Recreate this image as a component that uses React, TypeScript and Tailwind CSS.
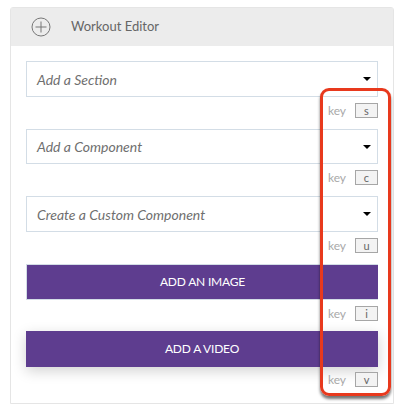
const sans = { fontFamily: 'Lato, sans-serif' }

function SelectRow({ label, short }: { label: string; short?: boolean }) {
  return (
    <div className={`${short ? 'h-[35px]' : 'h-[36px]'} bg-white border border-[#d3dde6] flex items-center justify-between pl-[10px]`}>
      <span className="text-[14px] italic text-[#6f6f6f]">{label}</span>
      <span className="mr-[6px] w-0 h-0 border-x-[4px] border-x-transparent border-t-[4px] border-t-black" />
    </div>
  )
}

function KeyHint({ hotkey }: { hotkey: string }) {
  return (
    <div className="flex justify-end items-center h-[15px] gap-[9px]">
      <span className="text-[12px] text-[#a9a9a9] leading-none">key</span>
      <span className="w-[23px] h-[15px] bg-[#f3f3f3] border border-[#a6a6a6] flex items-center justify-center text-[11px] text-[#666] leading-none">
        {hotkey}
      </span>
    </div>
  )
}

export default function App() {
  return (
    <div className="relative w-[406px] h-[415px] bg-white overflow-hidden pt-[7px] pl-[10px]" style={sans}>
      <div className="w-[384px] h-[397px] border border-[#e5e5e5] rounded-t-[3px]">
        {/* Header */}
        <div className="h-[38px] bg-[#ececec] flex items-center pl-[20px] gap-[20px]">
          <svg viewBox="0 0 20 20" className="w-[20px] h-[20px] text-[#777]" fill="none" stroke="currentColor" strokeWidth="1">
            <circle cx="10" cy="10" r="9" />
            <path d="M10 4.5v11M4.5 10h11" />
          </svg>
          <span className="text-[13px] text-[#666]">Workout Editor</span>
        </div>

        <div className="pl-[15px] pr-[15px] pt-[15px] flex flex-col">
          <SelectRow label="Add a Section" />
          <div className="mt-[6px]">
            <KeyHint hotkey="s" />
          </div>
          <div className="mt-[11px]">
            <SelectRow label="Add a Component" short />
          </div>
          <div className="mt-[6px]">
            <KeyHint hotkey="c" />
          </div>
          <div className="mt-[11px]">
            <SelectRow label="Create a Custom Component" />
          </div>
          <div className="mt-[6px]">
            <KeyHint hotkey="u" />
          </div>

          <button className="mt-[11px] h-[36px] bg-[#5e3d8f] border border-[#d3dde6] border-r-0 text-white text-[12px] tracking-[-0.2px]">
            ADD AN IMAGE
          </button>
          <div className="mt-[6px]">
            <KeyHint hotkey="i" />
          </div>

          <button className="mt-[10px] h-[36px] bg-[#5e3d8f] text-white text-[12px] tracking-[-0.2px] shadow-[0_4px_14px_rgba(0,0,0,0.18)]">
            ADD A VIDEO
          </button>
          <div className="mt-[5px]">
            <KeyHint hotkey="v" />
          </div>
        </div>
      </div>

      {/* Red annotation box */}
      <div className="absolute left-[320px] top-[88px] w-[71px] h-[308px] border-[3px] border-[#e8391d] rounded-[9px] shadow-[0_3px_3px_rgba(0,0,0,0.55)]" />
    </div>
  )
}
